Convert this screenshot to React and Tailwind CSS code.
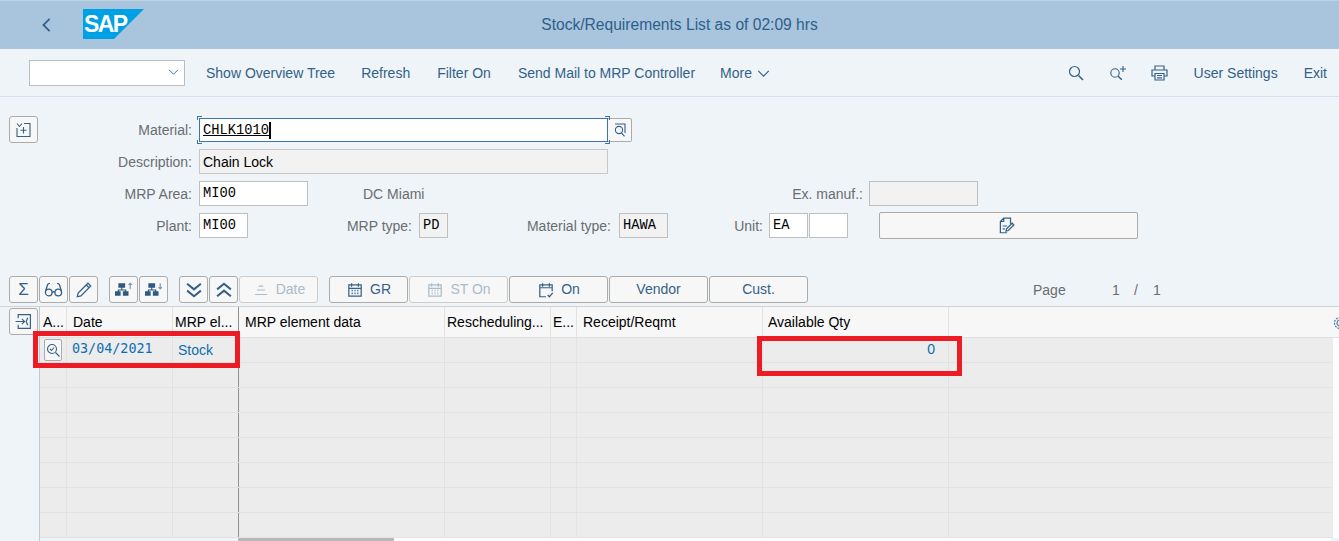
const cols = [
  { w: 'w-[27px]', label: 'A...', pad: 'pl-[3px]' },
  { w: 'w-[106px]', label: 'Date', pad: 'pl-[6px]' },
  { w: 'w-[66px]', label: 'MRP el...', pad: 'pl-[2px]' },
  { w: 'w-[206px]', label: 'MRP element data', pad: 'pl-[6px]' },
  { w: 'w-[106px]', label: 'Rescheduling...', pad: 'pl-[2px]' },
  { w: 'w-[26px]', label: 'E...', pad: 'pl-[2px]' },
  { w: 'w-[186px]', label: 'Receipt/Reqmt', pad: 'pl-[6px]' },
  { w: 'w-[186px]', label: 'Available Qty', pad: 'pl-[5px]' },
  { w: 'flex-1', label: '', pad: '' },
]

function Ico({ children, className = 'w-4 h-4' }) {
  return (
    <svg viewBox="0 0 16 16" fill="none" stroke="currentColor" strokeWidth="1.1" className={className}>
      {children}
    </svg>
  )
}

function Calendar() {
  return (
    <Ico className="w-[18px] h-[18px]">
      <path d="M2.5 3.5h11v10h-11zM2.5 6.500h11M5 2v3M11 2v3" />
      <path d="M5 8.500h1M7.500 8.500h1M10 8.500h1M5 11h1M7.500 11h1M10 11h1" strokeWidth="1.400" />
    </Ico>
  )
}

function Hierarchy({ down }) {
  return (
    <svg viewBox="0 0 16 14" fill="#2d5a80" className="w-[18px] h-4">
      <path d="M3 1h6v4H6.500v1.500H10V8h2v4H7V8h2V7.500H3.500V8H5v4H0V8h2.500V6.500H5.500V5H3z" />
      <path d={down ? 'M13.500 1v5M12 4.500L13.500 6 15 4.500' : 'M13.500 6V1M12 2.500L13.500 1 15 2.500'} fill="none" stroke="#6f97b8" />
    </svg>
  )
}

function ToolBtn({ children, w = 'w-[29px]', off }) {
  return (
    <button className={`${w} h-[27px] flex items-center justify-center gap-[6px] rounded-[3px] border text-[14px] bg-[#f7f7f7] ${off ? 'border-[#ccc] text-[#a9bccb]' : 'border-[#ababab] text-[#346187]'}`}>
      {children}
    </button>
  )
}

function Label({ w, children, className = '' }) {
  return <span className={`${w} pt-[1px] text-right text-[14px] text-[#6a6d70] shrink-0 ${className}`}>{children}</span>
}

function Field({ w, value, ro }) {
  return (
    <div className={`${w} h-[25px] shrink-0 border border-[#bfbfbf] pl-[3px] pt-[1px] flex items-center text-[13.75px] text-black font-['Liberation_Mono'] ${ro ? 'bg-[#f2f2f2]' : 'bg-white'}`}>
      {value}
    </div>
  )
}

function Cmd({ children, className = '' }) {
  return <span className={`mt-[2px] ${className}`}>{children}</span>
}

function Row({ cells = {} }) {
  return (
    <div className="flex h-[25px] border-b border-[#e2e2e2] bg-[#ececec]">
      {cols.map((c, i) => (
        <div key={i} className={`${c.w} shrink-0 flex items-center ${i === 2 ? 'border-r border-[#8f8f8f]' : i < 8 ? 'border-r border-[#e2e2e2]' : ''}`}>
          {cells[i]}
        </div>
      ))}
    </div>
  )
}

const firstRow = {
  0: (
    <span className="ml-[4px] w-[18px] h-[22px] border border-[#ababab] bg-[#f7f7f7] rounded-[2px] flex items-center justify-center text-[#346187]">
      <Ico className="w-[16px] h-[16px]"><circle cx="7" cy="7" r="4.500" /><path d="M10.500 10.500l4 4M5 7l1.500 1.500L9 5.500" /></Ico>
    </span>
  ),
  1: <span className="pl-[5px] -mt-[2px] font-['DejaVu_Sans_Mono'] text-[13.4px] text-[#0e6cb0]">03/04/2021</span>,
  2: <span className="pl-[5px] text-[14px] text-[#0e6cb0]">Stock</span>,
  7: <span className="ml-auto pr-[13px] -mt-[2px] text-[14px] text-[#0e6cb0]">0</span>,
}

export default function App() {
  return (
    <div className="w-[1339px] h-[541px] overflow-hidden relative bg-[#eff4f9] font-['Liberation_Sans',sans-serif]">
      {/* shell header */}
      <header className="h-[49px] bg-[#a9c4dd] border-t border-[#bcd1e4] flex items-center">
        <svg viewBox="0 0 12 18" fill="none" stroke="#346187" strokeWidth="2" className="ml-[41px] w-[11px] h-[16px]">
          <path d="M9.500 2L2.500 9l7 7" />
        </svg>
        <svg viewBox="0 0 61 30" className="ml-[31px] w-[61px] h-[30px] -mt-[2px]">
          <path d="M0 0h61L31 30H0z" fill="#00a1e4" />
          <text x="1" y="23" fontFamily="Liberation Sans" fontWeight="700" fontSize="23" letterSpacing="-1.600" fill="#fff">SAP</text>
        </svg>
        <h1 className="flex-1 text-center text-[15.6px] text-[#2e5f8a] ml-[-133px] pl-[9px]">Stock/Requirements List as of 02:09 hrs</h1>
      </header>

      {/* app toolbar */}
      <div className="h-[48px] border-b border-[#d5e2ee] flex items-center pl-[29px] pr-[12px] text-[14px] text-[#346187]">
        <div className="w-[156px] h-[26px] bg-white border border-[#bdbdbd] flex items-center justify-end pr-[5px] mr-[21px]">
          <svg viewBox="0 0 12 8" fill="none" stroke="#346187" strokeWidth="1" className="w-[11px] h-[7px]"><path d="M1 1l5 5 5-5" /></svg>
        </div>
        <Cmd className="mr-[26px]">Show Overview Tree</Cmd>
        <Cmd className="mr-[27px]">Refresh</Cmd>
        <Cmd className="mr-[27px]">Filter On</Cmd>
        <Cmd className="mr-[25px]">Send Mail to MRP Controller</Cmd>
        <Cmd className="mr-[5px]">More</Cmd>
        <svg viewBox="0 0 14 8" fill="none" stroke="#346187" strokeWidth="1.300" className="w-[13px] h-[7px] mt-[2px]"><path d="M1 1l6 6 6-6" /></svg>
        <div className="ml-auto flex items-center">
          <svg viewBox="0 0 16 16" fill="none" stroke="#346187" strokeWidth="1.200" className="w-[16px] h-[16px] mr-[25px]"><circle cx="6.500" cy="6.500" r="5" /><path d="M10.500 10.500l4.500 4.500" strokeWidth="1.600" /></svg>
          <svg viewBox="0 0 18 16" fill="none" stroke="#346187" strokeWidth="1.100" className="w-[18px] h-[16px] mr-[24px]"><circle cx="6" cy="8" r="4.200" /><path d="M9.200 11.200l3.600 3.600" strokeWidth="1.500" /><path d="M14 1v6M11 4h6" /></svg>
          <svg viewBox="0 0 17 16" fill="none" stroke="#346187" strokeWidth="1.200" className="w-[17px] h-[16px] mr-[26px]"><path d="M4 5V1h9v4M4 11H1V5h15v6h-3M4 8.500h9V15H4zM6 10.500h5M6 12.800h5" /></svg>
          <Cmd className="mr-[26px]">User Settings</Cmd>
          <Cmd>Exit</Cmd>
        </div>
      </div>

      {/* header form */}
      <div className="h-[179px] pt-[19px] pl-[9px]">
        <div className="flex items-center h-[27px]">
          <ToolBtn>
            <Ico><path d="M1 1.500l2.500 3 2.500-3M1 6v8.500h13V1.500H8M7.500 5v6.500M4.500 8.200h6" /></Ico>
          </ToolBtn>
          <Label w="w-[154px]" className="mr-[7px]">Material:</Label>
          <div className="relative w-[409px] h-[24px] shrink-0 bg-white border border-[#3a76ab] pl-[3px] pt-[1px] flex items-center text-[13.75px] text-black font-['Liberation_Mono']">
            <span className="underline border-r-2 border-black leading-[17px]">CHLK1010</span>
            <span className="absolute -left-[3px] -top-[3px] w-[5px] h-[4px] border-l border-t border-[#3a76ab]" />
            <span className="absolute -left-[3px] -bottom-[3px] w-[5px] h-[4px] border-l border-b border-[#3a76ab]" />
            <span className="absolute -right-[3px] -top-[3px] w-[5px] h-[4px] border-r border-t border-[#3a76ab]" />
            <span className="absolute -right-[3px] -bottom-[3px] w-[5px] h-[4px] border-r border-b border-[#3a76ab]" />
          </div>
          <div className="w-[24px] h-[24px] bg-[#f7f7f7] border border-[#ababab] border-l-0 rounded-r-[2px] flex items-center justify-center text-[#346187]">
            <Ico><path d="M3 2h10v9" /><circle cx="7" cy="8" r="3.600" /><path d="M9.500 10.800l3 3.500" /></Ico>
          </div>
        </div>
        <div className="flex items-center mt-[6px] pl-[29px]">
          <Label w="w-[154px]" className="mr-[7px]">Description:</Label>
          <div className="w-[409px] h-[25px] border border-[#c8c8c8] bg-[#f2f2f2] pl-[3px] pt-[1px] flex items-center text-[14px] text-black">Chain Lock</div>
        </div>
        <div className="flex items-center mt-[7px] pl-[29px]">
          <Label w="w-[154px]" className="mr-[7px]">MRP Area:</Label>
          <Field w="w-[109px]" value="MI00" />
          <span className="ml-[55px] pt-[1px] w-[120px] text-[14px] text-[#6a6d70]">DC Miami</span>
          <Label w="w-[380px]" className="mr-[6px]">Ex. manuf.:</Label>
          <Field w="w-[109px]" ro />
        </div>
        <div className="flex items-center h-[27px] mt-[6px] pl-[29px]">
          <Label w="w-[154px]" className="mr-[7px]">Plant:</Label>
          <Field w="w-[49px]" value="MI00" />
          <Label w="w-[164px]" className="mr-[7px]">MRP type:</Label>
          <Field w="w-[29px]" value="PD" ro />
          <Label w="w-[163px]" className="mr-[8px]">Material type:</Label>
          <Field w="w-[49px]" value="HAWA" ro />
          <Label w="w-[95px]" className="mr-[6px]">Unit:</Label>
          <Field w="w-[39px]" value="EA" />
          <div className="ml-[1px]"><Field w="w-[39px]" /></div>
          <button className="ml-[31px] w-[259px] h-[27px] rounded-[2px] border border-[#ababab] bg-[#f7f7f7] flex items-center justify-center pr-[6px] text-[#346187]">
            <Ico className="w-[18px] h-[18px]"><path d="M9 14H3V4l3-3h6v5M3 4h3V1M5 8h4M5 10.500h2M8 12.500l.5-2 5-5 1.500 1.500-5 5z" /></Ico>
          </button>
        </div>
      </div>

      {/* grid toolbar */}
      <div className="h-[31px] flex items-start pl-[9px] border-b border-[#d3d3d3]">
        <div className="flex gap-px">
          <ToolBtn><span className="text-[17px]">Σ</span></ToolBtn>
          <ToolBtn>
            <Ico className="w-[19px] h-[19px]"><circle cx="4" cy="10.500" r="2.800" /><circle cx="12" cy="10.500" r="2.800" /><path d="M6.800 10.500c.8-.8 1.600-.8 2.400 0M1.300 9.500L3 4c.3-.9 1-1.200 2-1.200M14.700 9.500L13 4c-.3-.9-1-1.200-2-1.200" /></Ico>
          </ToolBtn>
          <ToolBtn>
            <Ico className="w-[18px] h-[18px]"><path d="M2 14l.8-3.300L11.500 2 14 4.500l-8.700 8.700zM10 3.500L12.500 6" /></Ico>
          </ToolBtn>
        </div>
        <div className="flex gap-px ml-[11px]">
          <ToolBtn><Hierarchy /></ToolBtn>
          <ToolBtn><Hierarchy down /></ToolBtn>
        </div>
        <div className="flex gap-px ml-[11px]">
          <ToolBtn><Ico className="w-5 h-5"><path d="M2.500 3l5.500 4.500L13.500 3M2.500 8.500L8 13l5.500-4.500" strokeWidth="1.600" /></Ico></ToolBtn>
          <ToolBtn><Ico className="w-5 h-5"><path d="M2.500 7.500L8 3l5.500 4.500M2.500 13L8 8.500l5.500 4.500" strokeWidth="1.600" /></Ico></ToolBtn>
          <ToolBtn w="w-[79px]" off><Ico className="w-[18px] h-[18px]"><path d="M6 4.500h4M4.500 8h7M2.500 12h11" /></Ico>Date</ToolBtn>
        </div>
        <div className="flex gap-px ml-[11px]">
          <ToolBtn w="w-[79px]"><Calendar />GR</ToolBtn>
          <ToolBtn w="w-[99px]" off><Calendar />ST On</ToolBtn>
          <ToolBtn w="w-[99px]"><Ico className="w-[18px] h-[18px]"><path d="M8 14H2.500V3.500h11V9M2.500 6h11M5 2v3M11 2v3M9.500 12.500l1.500 1.500 3-3.500" /></Ico>On</ToolBtn>
          <ToolBtn w="w-[99px]">Vendor</ToolBtn>
          <ToolBtn w="w-[99px]">Cust.</ToolBtn>
        </div>
        <div className="ml-[225px] mt-[4px] flex text-[14px] text-[#6a6d70]">
          <span className="w-[79px]">Page</span>
          <span className="w-[22px]">1</span>
          <span className="w-[19px]">/</span>
          <span>1</span>
        </div>
      </div>

      {/* table */}
      <div className="flex h-[234px]">
        <div className="w-[30px] ml-[9px] shrink-0 pt-[1px]">
          <ToolBtn>
            <Ico className="w-[17px] h-[17px]"><path d="M3 5V1.500h11.500v13H3V11M.5 8H9M6.500 5.500L9 8l-2.500 2.500M12 4.500L10.500 8l1.500 3.500" /></Ico>
          </ToolBtn>
        </div>
        <div className="flex-1 border-l border-[#c4c8cc] min-w-0">
          <div className="flex h-[31px] bg-[#f7f7f7] border-b border-[#e0e0e0]">
            {cols.map((c, i) => (
              <div key={i} className={`${c.w} ${c.pad} ${i === 8 ? 'justify-end' : ''} shrink-0 flex items-center pt-[1px] text-[14px] text-black whitespace-nowrap overflow-hidden ${i === 2 ? 'border-r border-[#8f8f8f]' : i < 8 ? 'border-r border-[#e2e2e2]' : ''}`}>
                {c.label}
                {i === 8 && (
                  <svg viewBox="0 0 6 14" fill="none" stroke="#4a7da8" strokeWidth="1.200" className="w-[6px] h-[14px]"><circle cx="7" cy="7" r="5.500" strokeDasharray="2 1" /><circle cx="7" cy="7" r="3" /></svg>
                )}
              </div>
            ))}
          </div>
          <div className="flex">
            <div className="flex-1 min-w-0">
              {[0, 1, 2, 3, 4, 5, 6, 7].map((n) => <Row key={n} cells={n === 0 ? firstRow : undefined} />)}
            </div>
            <div className="w-[6px] shrink-0 bg-white" />
          </div>
          <div className="flex h-[3px] pl-[198px]">
            <div className="w-[156px] bg-[#b8b8b8]" />
            <div className="w-[937px] bg-white" />
          </div>
        </div>
      </div>

      {/* red highlight boxes */}
      <div className="absolute left-[33px] top-[331px] w-[207px] h-[37px] border-[5px] border-[#ed1c24]" />
      <div className="absolute left-[757px] top-[336px] w-[205px] h-[40px] border-[5px] border-[#ed1c24]" />
    </div>
  )
}
